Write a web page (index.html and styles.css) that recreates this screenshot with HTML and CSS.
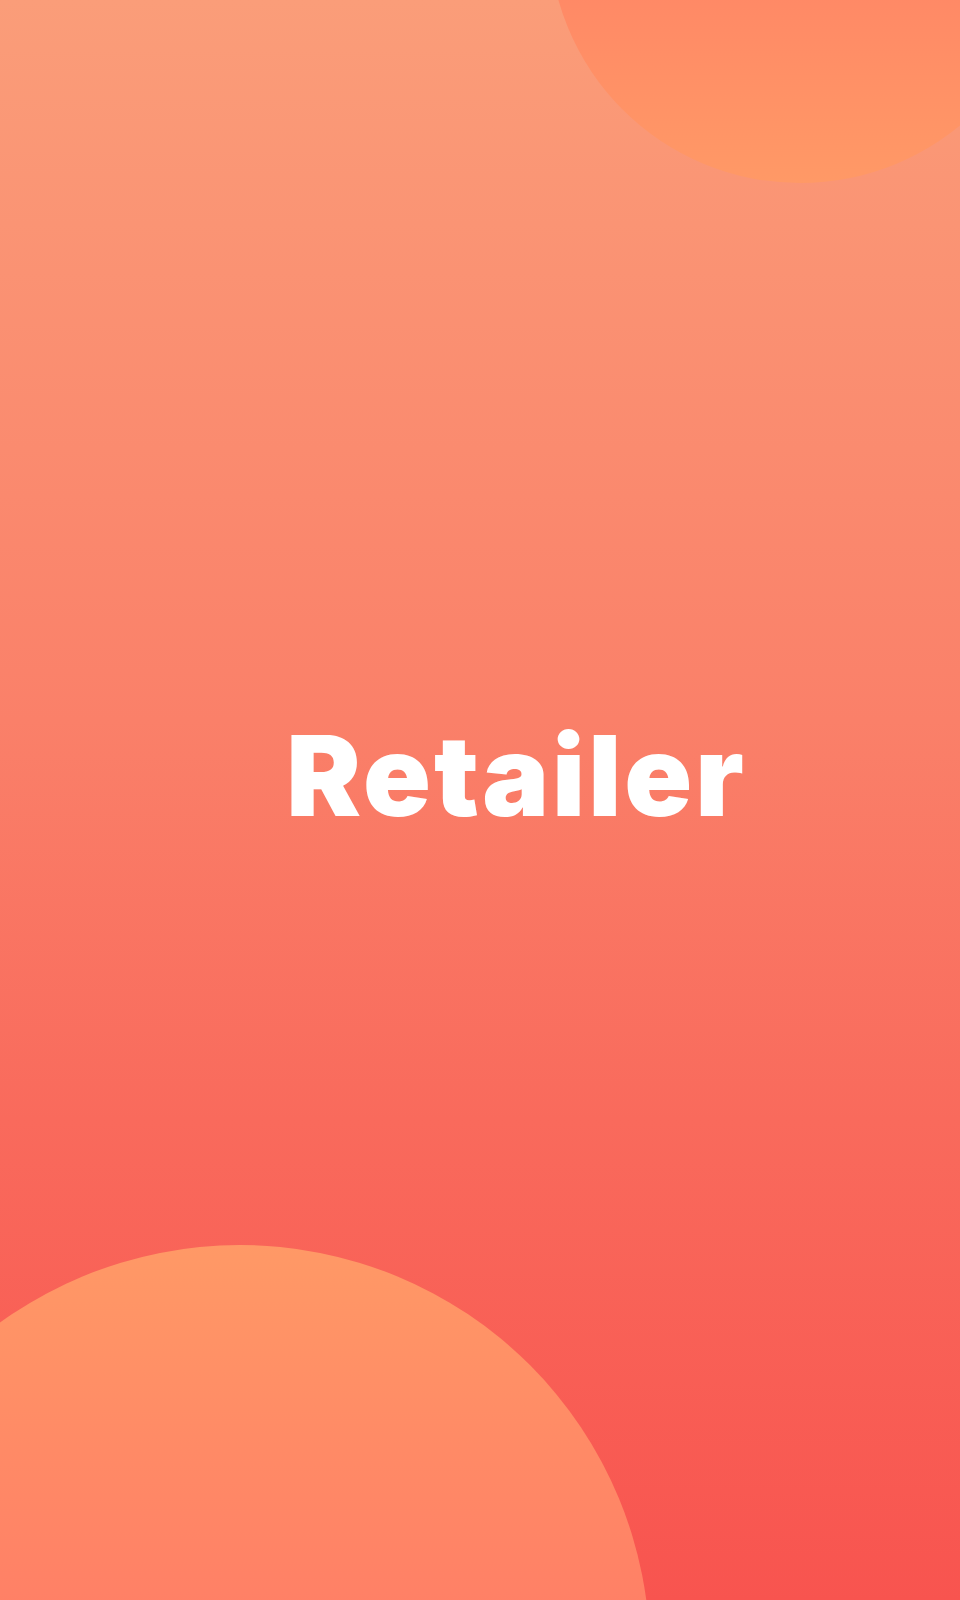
FILE: index.html
```html
<!DOCTYPE html>
<html lang="en">
<head>
<meta charset="utf-8">
<title>Retailer</title>
<link rel="stylesheet" href="styles.css">
</head>
<body>
<main class="splash">
  <div class="blob blob-top"></div>
  <div class="blob blob-bottom"></div>
  <h1 class="brand">Retailer</h1>
</main>
</body>
</html>
```

FILE: styles.css
```css
html, body {
  margin: 0;
  padding: 0;
}

.splash {
  position: relative;
  width: 960px;
  height: 1600px;
  overflow: hidden;
  background: linear-gradient(180deg, #fa9d79 0%, #fa8069 45%, #f96a5c 70%, #f8544f 100%);
  display: flex;
  align-items: center;
  justify-content: center;
  box-sizing: border-box;
  padding: 0 0 50px 73px;
}

.blob {
  position: absolute;
  border-radius: 50%;
}

.blob-top {
  width: 502px;
  height: 502px;
  left: 549px;
  top: -319px;
  background: linear-gradient(180deg, #ff7f66 0%, #ff8866 60%, #ff9966 100%);
}

.blob-bottom {
  width: 820px;
  height: 820px;
  left: -170px;
  top: 1245px;
  background: linear-gradient(180deg, #ff9966 0%, #ff8a66 25%, #ff7d66 50%);
}

.brand {
  position: relative;
  margin: 0;
  color: #ffffff;
  font-family: "Inter", "Open Sans", sans-serif;
  font-weight: 900;
  font-size: 112px;
  letter-spacing: 3px;
  line-height: 1;
}
```
